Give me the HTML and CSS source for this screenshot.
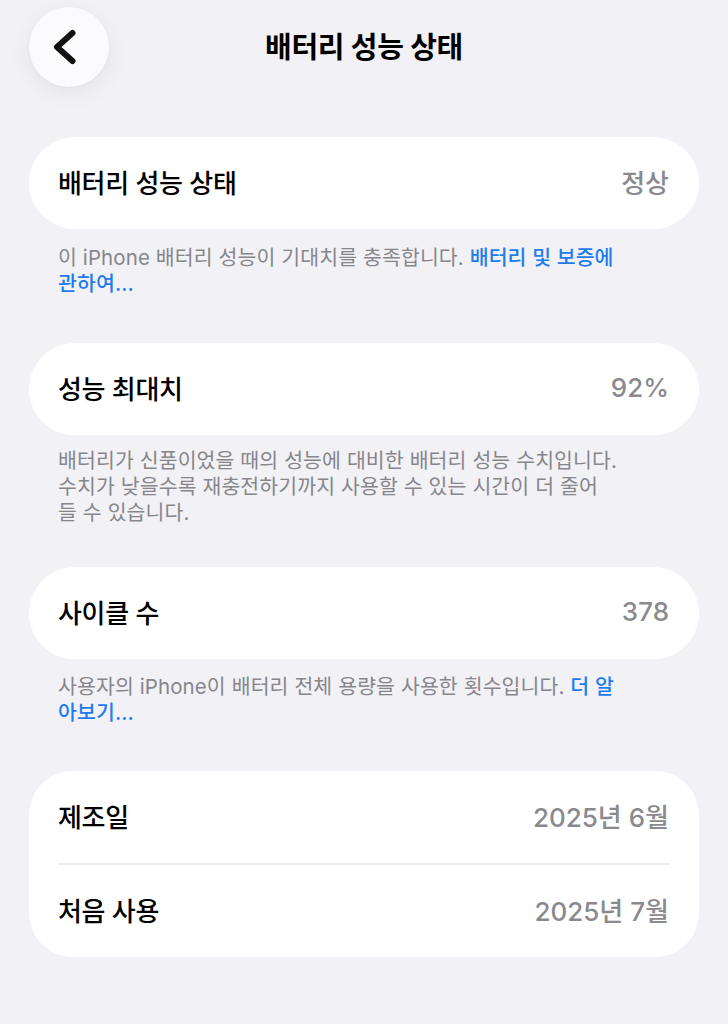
FILE: index.html
```html
<!DOCTYPE html>
<html lang="ko">
<head>
<meta charset="utf-8">
<title>배터리 성능 상태</title>
<link rel="stylesheet" href="styles.css">
</head>
<body>
<header class="header">
  <button class="back" aria-label="뒤로">
    <svg viewBox="0 0 80 80" width="80" height="80"><path d="M43.5 26 L28 40 L43.5 54" fill="none" stroke="#111" stroke-width="6" stroke-linecap="round" stroke-linejoin="round"/></svg>
  </button>
  <h1 class="title">배터리 성능 상태</h1>
  <span></span>
</header>
<main class="content">
  <section class="group g1">
    <div class="card">
      <div class="row"><span class="label">배터리 성능 상태</span><span class="value">정상</span></div>
    </div>
    <p class="footer">이 iPhone 배터리 성능이 기대치를 충족합니다. <a class="link">배터리 및 보증에<br>관하여...</a></p>
  </section>
  <section class="group g2">
    <div class="card">
      <div class="row"><span class="label">성능 최대치</span><span class="value">92%</span></div>
    </div>
    <p class="footer">배터리가 신품이었을 때의 성능에 대비한 배터리 성능 수치입니다.<br>수치가 낮을수록 재충전하기까지 사용할 수 있는 시간이 더 줄어<br>들 수 있습니다.</p>
  </section>
  <section class="group g3">
    <div class="card">
      <div class="row"><span class="label">사이클 수</span><span class="value">378</span></div>
    </div>
    <p class="footer">사용자의 iPhone이 배터리 전체 용량을 사용한 횟수입니다. <a class="link">더 알<br>아보기...</a></p>
  </section>
  <section class="group">
    <div class="card card-multi">
      <div class="row"><span class="label">제조일</span><span class="value">2025년 6월</span></div>
      <div class="divider"></div>
      <div class="row"><span class="label">처음 사용</span><span class="value">2025년 7월</span></div>
    </div>
  </section>
</main>
</body>
</html>
```

FILE: styles.css
```css
* { box-sizing: border-box; }
html, body {
  margin: 0;
  padding: 0;
  background: #f2f1f6;
  font-family: "Inter", "Noto Sans CJK KR", "Noto Sans", sans-serif;
  color: #000;
}
.header {
  display: grid;
  grid-template-columns: 80px 1fr 80px;
  align-items: center;
  padding: 7px 29px 0;
  height: 87px;
}
.back {
  width: 80px;
  height: 80px;
  border-radius: 50%;
  border: none;
  padding: 0;
  background: #fbfbfd;
  box-shadow: 0 6px 24px rgba(0, 0, 0, 0.06), 0 1px 4px rgba(0, 0, 0, 0.03);
  display: flex;
  align-items: center;
  justify-content: center;
}
.back svg { display: block; }
.title {
  margin: 0;
  text-align: center;
  font-size: 29px;
  font-weight: 700;
  letter-spacing: -0.3px;
  line-height: 1;
}
.content {
  padding: 50px 29px 0;
}
.group { margin-bottom: 44px; }
.g1 { margin-bottom: 46px; }
.g2 { margin-bottom: 41px; }
.g3 { margin-bottom: 45px; }
.card {
  background: #fff;
  border-radius: 46px;
}
.card-multi { border-radius: 44px; }
.row {
  height: 92px;
  display: flex;
  align-items: center;
  justify-content: space-between;
  padding: 0 30px 3px 29px;
}
.label {
  font-size: 26px;
  font-weight: 500;
  letter-spacing: -0.3px;
}
.value {
  font-size: 26px;
  font-weight: 500;
  color: #8a8a8e;
  letter-spacing: 0;
}
.divider {
  height: 2px;
  background: #ececef;
  margin: 0 29px;
}
.footer {
  margin: 16px 0 0;
  padding: 0 29px;
  font-size: 20.5px;
  line-height: 26px;
  color: #86868b;
  letter-spacing: 0.1px;
  white-space: nowrap;
}
.g2 .footer { margin-top: 13px; }
.g3 .footer { margin-top: 15px; }
.link {
  color: #1f7cf0;
  font-weight: 500;
}
```
